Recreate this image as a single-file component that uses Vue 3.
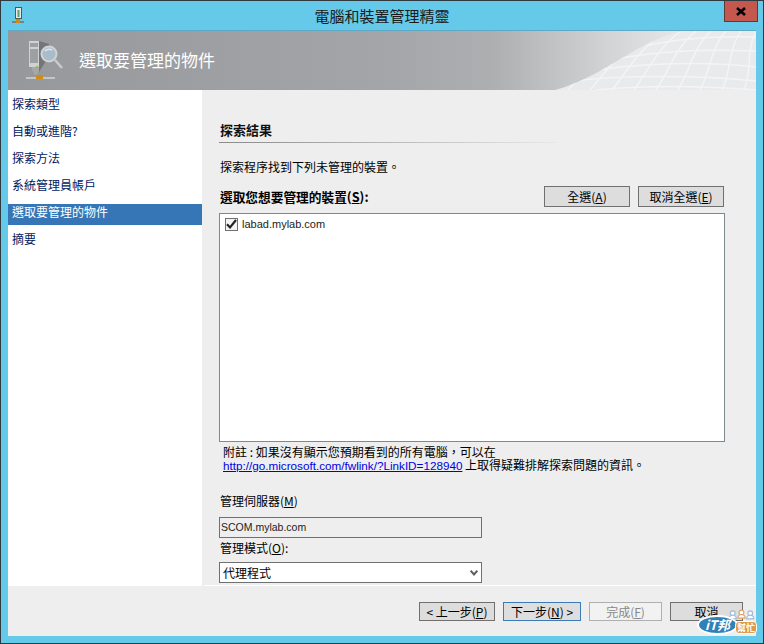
<script setup>
const steps = ['探索類型', '自動或進階?', '探索方法', '系統管理員帳戶', '選取要管理的物件', '摘要']
const activeStep = 4
const verticals = [0, 1, 2, 3, 4, 5, 6, 7, 8, 9]
</script>

<template>
  <div class="window">
    <header class="titlebar">
      <svg class="app-icon" width="12" height="17" viewBox="0 0 12 17">
        <rect x="3.5" y="0.5" width="6" height="11" fill="#e8e8e8" stroke="#555" />
        <rect x="5.5" y="3" width="2" height="7" fill="#5f9f6a" />
        <rect x="0" y="14" width="12" height="2" fill="#808080" />
        <rect x="4" y="12" width="4" height="4" fill="#cf8a10" />
      </svg>
      <h1 class="title">電腦和裝置管理精靈</h1>
      <button class="close">
        <svg width="10" height="9" viewBox="0 0 10 9"><path d="M1 1 L9 8 M9 1 L1 8" stroke="#000" stroke-width="2.6" /></svg>
      </button>
    </header>

    <div class="frame">
      <div class="banner">
        <svg class="banner-icon" width="40" height="42" viewBox="0 0 40 42">
          <path d="M14 1l10 3v12l-10 16z" fill="#737679" />
          <path d="M4 1h10v26H4z" fill="#cfd1d2" />
          <path d="M5 4h8M5 6h8M5 10h8M5 12h8M5 14h8M5 16h8M5 18h8M5 20h8M5 22h8" stroke="#6d7072" />
          <path d="M7 27h7v3l-2 5h-2l-3-5z" fill="#a5a7a9" />
          <circle cx="24" cy="14" r="7.5" fill="#a9bccb" stroke="#d0d3d5" stroke-width="2" />
          <path d="M20 11q3-3 7-1" stroke="#dfe6ec" stroke-width="1.5" fill="none" />
          <path d="M30 20l7 8" stroke="#c8cacb" stroke-width="2.6" />
          <rect x="1" y="37" width="29" height="2" fill="#c3c5c6" />
          <rect x="11" y="35" width="7" height="4" fill="#d08c10" />
          <rect x="11" y="26" width="2" height="2" fill="#7fc83c" />
        </svg>
        <span class="banner-title">選取要管理的物件</span>
        <svg class="mesh" width="220" height="59" viewBox="0 0 220 59">
          <defs>
            <clipPath id="meshClip">
              <path d="M19 59 C70 45 100 10 147 0 L220 0 L220 59 Z" />
            </clipPath>
          </defs>
          <path d="M19 59 C70 45 100 10 147 0 L220 0 L220 59 Z" fill="#e9eaeb" />
          <g clip-path="url(#meshClip)" fill="none" stroke="#f4f4f5" stroke-width="1.5">
            <path d="M110 15 C140 8 180 5 220 6" />
            <path d="M80 28 C120 20 170 18 220 20" />
            <path d="M55 40 C100 32 170 30 220 36" />
            <path d="M35 50 C90 44 160 44 220 50" />
            <path d="M60 59 C110 54 170 55 220 59" />
            <path v-for="i in verticals" :key="i" :d="`M${32 + i * 22} 59 C${48 + i * 21} 42 ${66 + i * 18} 18 ${100 + i * 15} 0`" />
          </g>
        </svg>
      </div>

      <div class="body">
        <nav class="steps">
          <div v-for="(s, i) in steps" :key="s" class="step" :class="{ active: i === activeStep }">{{ s }}</div>
        </nav>

        <main class="content">
          <h2 class="section">探索結果</h2>
          <p class="intro">探索程序找到下列未管理的裝置。</p>
          <div class="list-head">
            <label class="list-label">選取您想要管理的裝置(<u>S</u>):</label>
            <div class="list-actions">
              <button class="btn">全選(<u>A</u>)</button>
              <button class="btn">取消全選(<u>E</u>)</button>
            </div>
          </div>
          <div class="listbox">
            <div class="list-item">
              <span class="check">
                <svg width="11" height="10" viewBox="0 0 11 10"><path d="M1 5.2 L4 8.4 L10 1" fill="none" stroke="#222" stroke-width="2.2" /></svg>
              </span>
              <span>labad.mylab.com</span>
            </div>
          </div>
          <div class="note">
            <div>附註 : 如果沒有顯示您預期看到的所有電腦，可以在</div>
            <div><a class="link">http://go.microsoft.com/fwlink/?LinkID=128940</a> 上取得疑難排解探索問題的資訊。</div>
          </div>
          <label class="field-label server-label">管理伺服器(<u>M</u>)</label>
          <div class="readonly">SCOM.mylab.com</div>
          <label class="field-label mode-label">管理模式(<u>O</u>):</label>
          <div class="select">
            <span>代理程式</span>
            <svg width="8" height="6" viewBox="0 0 8 6"><path d="M0.7 0.7 L4 4.5 L7.3 0.7" fill="none" stroke="#606060" stroke-width="2" /></svg>
          </div>
        </main>
      </div>

      <footer class="footer">
        <button class="wbtn prev">&lt; 上一步(<u>P</u>)</button>
        <button class="wbtn primary">下一步(<u>N</u>) &gt;</button>
        <button class="wbtn disabled">完成(<u>F</u>)</button>
        <button class="wbtn cancel">取消</button>
      </footer>
    </div>

    <div class="badge">
      <svg class="badge-people" width="27" height="11" viewBox="0 0 34 13">
        <g fill="#fff" stroke="#9db9d8" stroke-width="1.4">
          <circle cx="6" cy="5" r="3" />
          <path d="M1.5 12c0-3 2-4.500 4.500-4.500s4.500 1.500 4.500 4.500z" />
          <circle cx="17" cy="4" r="3" stroke="#e0a36a" />
          <path d="M12.500 11c0-3 2-4.500 4.500-4.500s4.500 1.500 4.500 4.500z" stroke="#e0a36a" />
          <circle cx="28" cy="5" r="3" />
          <path d="M23.500 12c0-3 2-4.500 4.500-4.500s4.500 1.500 4.500 4.500z" />
        </g>
      </svg>
      <span class="badge-oval">iT邦</span>
      <span class="badge-help">幫忙</span>
    </div>
  </div>
</template>

<style scoped>
.window {
  position: relative;
  width: 764px;
  height: 644px;
  box-sizing: border-box;
  background: #65c9ea;
  border: 1px solid #2f3a40;
  font-family: "Noto Sans CJK TC", "Liberation Sans", sans-serif;
  font-size: 12px;
  color: #000;
  overflow: hidden;
  display: flex;
  flex-direction: column;
}
.titlebar {
  position: relative;
  height: 29px;
  flex: none;
  display: flex;
  align-items: center;
  justify-content: center;
}
.app-icon { position: absolute; left: 11px; top: 6px; }
.title { margin: 0; font-size: 15px; font-weight: 400; color: #1a1a1a; }
.close {
  position: absolute;
  right: 5px;
  top: -1px;
  width: 34px;
  height: 22px;
  box-sizing: border-box;
  border: 1px solid #5c3a38;
  background: #c4584e;
  display: flex;
  align-items: center;
  justify-content: center;
  padding: 0;
}
.frame {
  margin: 0 7px 7px 7px;
  flex: 1;
  background: #eeeeee;
  display: flex;
  flex-direction: column;
  min-height: 0;
  border-top: 1px solid #5fa8c6;
}
.banner {
  position: relative;
  height: 59px;
  flex: none;
  background: linear-gradient(90deg, #96989b 0%, #a3a5a8 50%, #adafb1 65%, #d2d3d5 80%, #e6e7e8 90%, #eeeeef 100%);
  display: flex;
  align-items: center;
  overflow: hidden;
}
.banner-icon { margin-left: 17px; flex: none; }
.banner-title { margin: -2px 0 0 14px; font-size: 17px; color: #fff; }
.mesh { position: absolute; right: 0; top: 0; }
.body { display: flex; height: 496px; flex: none; }
.steps {
  width: 194px;
  flex: none;
  background: #fff;
  padding-top: 1px;
}
.step {
  height: 27px;
  line-height: 26px;
  padding-left: 4px;
  color: #00205f;
}
.step.active {
  background: #3676b6;
  color: #fff;
  height: 21px;
  line-height: 16px;
  margin: 5px 0 1px;
}
.content {
  flex: 1;
  min-width: 0;
  padding: 30px 0 0 17px;
  display: flex;
  flex-direction: column;
  align-items: flex-start;
}
.section {
  margin: 0;
  width: 337px;
  height: 23px;
  padding-left: 1px;
  font-size: 13px;
  font-weight: 700;
  line-height: 19px;
  border-bottom: 1px solid #a9a9a9;
  border-image: linear-gradient(90deg, #8a8a8a, #e8e8e8) 1;
  box-sizing: border-box;
  color: #111;
}
.intro { margin: 15px 0 0 1px; line-height: 18px; height: 18px; }
.list-head {
  margin-top: 9px;
  width: 505px;
  height: 23px;
  display: flex;
  justify-content: space-between;
  align-items: flex-start;
}
.list-label { font-weight: 700; font-size: 12.7px; line-height: 23px; margin-left: 1px; }
.list-actions { display: flex; gap: 8px; padding-top: 1px; }
.btn {
  width: 86px;
  height: 21px;
  border: 1px solid #707070;
  background: #dddddd;
  font: inherit;
  padding: 0;
  color: #000;
}
.listbox {
  margin-top: 5px;
  width: 506px;
  height: 229px;
  box-sizing: border-box;
  background: #fff;
  border: 1px solid #7f8a90;
  padding: 1px 5px;
}
.list-item {
  display: flex;
  align-items: center;
  gap: 4px;
  height: 18px;
  font-family: "Liberation Sans", sans-serif;
  font-size: 11px;
  color: #222;
}
.check {
  width: 11px;
  height: 11px;
  border: 1px solid #707070;
  background: #f4f4f4;
  display: flex;
  align-items: center;
  justify-content: center;
}
.note { margin: 3px 0 0 4px; line-height: 13px; white-space: nowrap; }
.link {
  color: #0000e6;
  text-decoration: underline;
  font-family: "Liberation Sans", sans-serif;
  font-size: 11.7px;
}
.field-label { display: block; line-height: 16px; margin-left: 1px; }
.server-label { margin-top: 21px; }
.readonly {
  margin-top: 8px;
  width: 263px;
  height: 21px;
  box-sizing: border-box;
  border: 1px solid #707070;
  background: #eeeeee;
  padding-left: 1px;
  line-height: 19px;
  font-family: "Liberation Sans", sans-serif;
  font-size: 10.5px;
  color: #222;
}
.mode-label { margin-top: 2px; }
.select {
  margin-top: 6px;
  width: 263px;
  height: 21px;
  box-sizing: border-box;
  border: 1px solid #707070;
  background: #fff;
  padding: 0 3px;
  display: flex;
  justify-content: space-between;
  align-items: center;
}
.footer {
  position: relative;
  flex: 1;
  display: flex;
  justify-content: flex-end;
  padding: 16px 13px 0 0;
  gap: 8px;
}
.footer::before {
  content: "";
  position: absolute;
  left: 196px;
  right: 0;
  top: -1px;
  height: 1px;
  background: #fff;
}
.wbtn {
  width: 76px;
  height: 19px;
  box-sizing: border-box;
  border: 1px solid #707070;
  background: #dddddd;
  font: inherit;
  padding: 0;
  line-height: 15px;
  color: #000;
}
.primary { width: 78px; border-color: #3a7cb8; background: #dedede; }
.disabled { width: 73px; border-color: #b0b0b0; background: #f2f2f2; color: #888; }
.cancel { width: 73px; }
.badge {
  position: absolute;
  right: 2px;
  bottom: 3px;
  width: 64px;
  height: 36px;
}
.badge-people { position: absolute; left: 31px; top: 5px; }
.badge-oval {
  position: absolute;
  left: 0;
  top: 11px;
  width: 41px;
  height: 20px;
  border-radius: 50%;
  background: #2f81b8;
  border: 2px solid #fff;
  box-sizing: border-box;
  color: #fff;
  font-weight: 700;
  font-style: italic;
  font-size: 13px;
  line-height: 15px;
  text-align: center;
}
.badge-help {
  position: absolute;
  left: 38px;
  top: 17px;
  width: 22px;
  height: 13px;
  font-size: 9px;
  font-weight: 700;
  color: #fff;
  background: #dd9a4a;
  border: 1px solid #fff;
  box-sizing: border-box;
  border-radius: 4px;
  line-height: 11px;
  text-align: center;
}
</style>

<style>
html, body { margin: 0; background: #65c9ea; }
</style>
